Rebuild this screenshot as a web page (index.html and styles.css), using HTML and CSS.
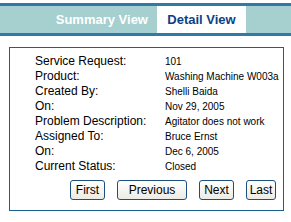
FILE: index.html
```html
<!DOCTYPE html>
<html lang="en">
<head>
    <meta charset="UTF-8">
    <title>Service Request</title>
    <link rel="stylesheet" href="styles.css">
</head>
<body>
    <!-- tabs -->
    <div class="tabbar">
        <div class="tab">Summary View</div>
        <div class="tab tab-active">Detail View</div>
    </div>

    <!-- detail box -->
    <div class="detail">
        <div class="fields">
            <div class="label">Service Request:</div><div class="value">101</div>
            <div class="label">Product:</div><div class="value">Washing Machine W003a</div>
            <div class="label">Created By:</div><div class="value">Shelli Baida</div>
            <div class="label">On:</div><div class="value">Nov 29, 2005</div>
            <div class="label">Problem Description:</div><div class="value">Agitator does not work</div>
            <div class="label">Assigned To:</div><div class="value">Bruce Ernst</div>
            <div class="label">On:</div><div class="value">Dec 6, 2005</div>
            <div class="label">Current Status:</div><div class="value">Closed</div>
        </div>
        <div class="nav">
            <button class="btn-first">First</button>
            <button class="btn-prev">Previous</button>
            <button class="btn-next">Next</button>
            <button class="btn-last">Last</button>
        </div>
    </div>
</body>
</html>
```

FILE: styles.css
```css
body {
    margin: 0;
    padding-top: 3px;
    font-family: "Liberation Sans", Arial, sans-serif;
    background: white;
    color: black;
}

/* tab bar */
.tabbar {
    display: flex;
    justify-content: flex-end;
    height: 27px;
    background-color: #a6cfcf;
    border-top: 3px solid #3079a9;
    border-bottom: 3px solid #3079a9;
    padding-right: 45px;
}

.tab {
    display: flex;
    align-items: center;
    padding: 0 9px;
    white-space: nowrap;
    font-weight: bold;
    font-size: 13px;
    color: white;
}

.tab-active {
    background-color: white;
    color: #0b3f86;
    width: 89px;
    box-sizing: border-box;
    padding: 0;
    justify-content: center;
}

/* detail box */
.detail {
    margin: 11px 7px 0 9px;
    border: 1px solid #1b5f8e;
    height: 164px;
    padding-top: 6px;
    box-sizing: border-box;
}

.fields {
    display: grid;
    grid-template-columns: 130px auto;
    padding-left: 25px;
    line-height: 15px;
}

.label {
    font-size: 12px;
}

.value {
    font-size: 10px;
}

.nav {
    display: flex;
    justify-content: flex-end;
    gap: 12px;
    padding-right: 7px;
    margin-top: 6px;
}

button {
    height: 20px;
    padding: 0;
    font-family: "Liberation Sans", Arial, sans-serif;
    font-size: 12px;
    color: black;
    background: linear-gradient(#ffffff, #ecebe5);
    border: 1px solid #1c4f7c;
    border-radius: 3px;
}

.btn-first { width: 35px; }
.btn-prev { width: 70px; }
.btn-next { width: 35px; }
.btn-last { width: 30px; }
```
